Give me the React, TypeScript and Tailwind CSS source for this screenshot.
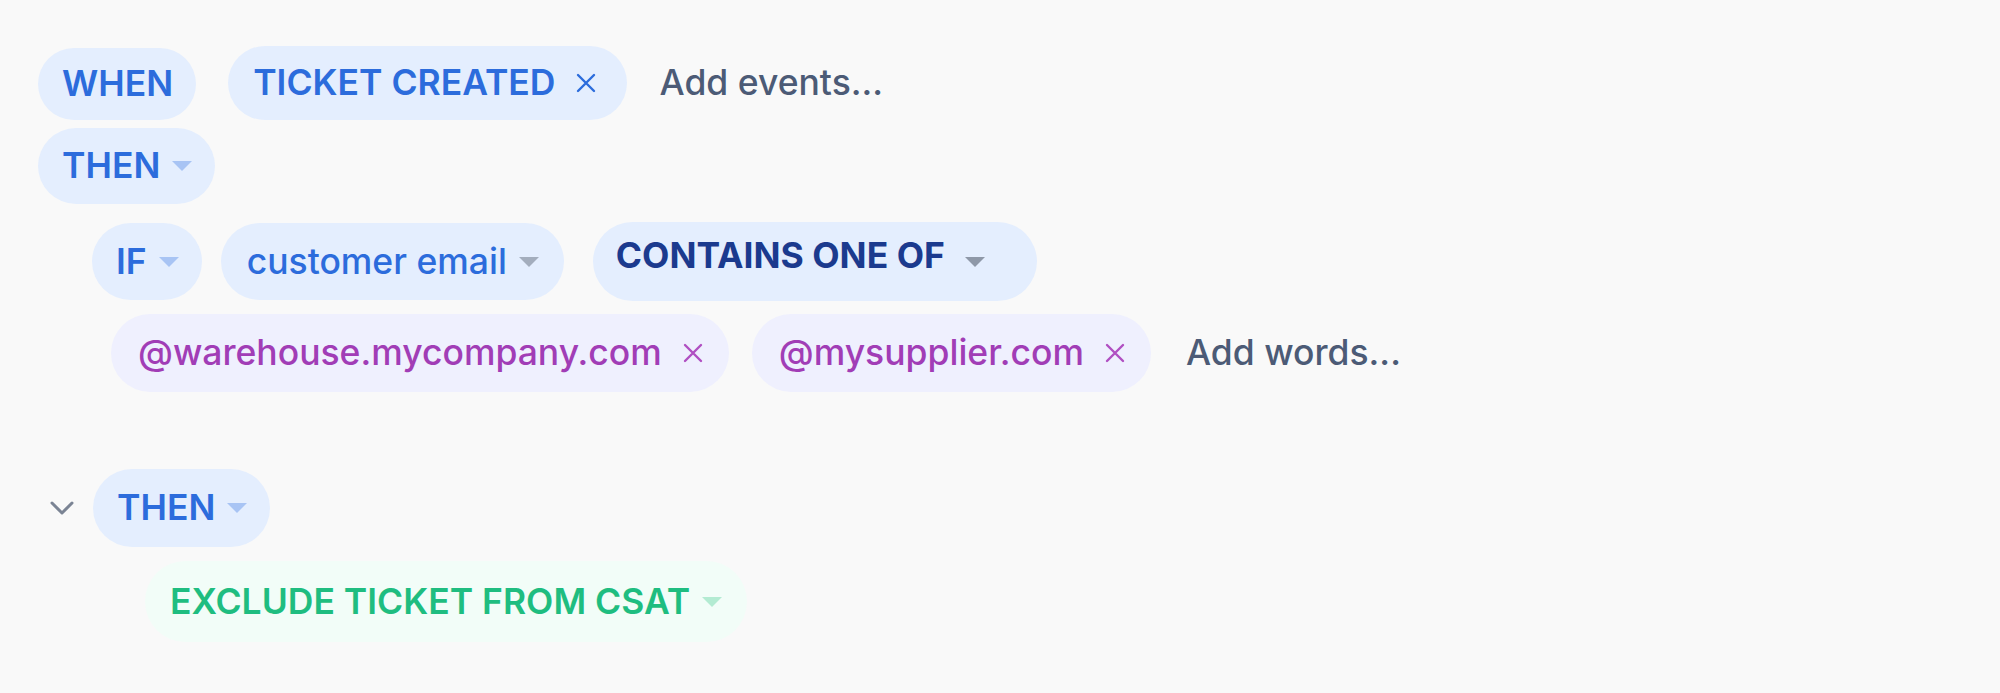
import React from 'react';

const Caret = ({ color }: { color: string }) => (
  <svg width="20" height="10" viewBox="0 0 20 10" className="shrink-0">
    <polygon points="0,0 20,0 10,10" fill={color} />
  </svg>
);

const Cross = ({ color }: { color: string }) => (
  <svg width="20" height="20" viewBox="0 0 20 20" className="shrink-0">
    <path d="M2 2 L18 18 M18 2 L2 18" stroke={color} strokeWidth="2.4" strokeLinecap="round" />
  </svg>
);

const Chevron = () => (
  <svg width="24" height="14" viewBox="0 0 24 14" className="shrink-0">
    <path d="M2 2 L12 12 L22 2" stroke="#7b8494" strokeWidth="3" fill="none" strokeLinecap="round" strokeLinejoin="round" />
  </svg>
);

const Keyword: React.FC<{ label: string; caret?: boolean; className?: string }> = ({ label, caret, className = '' }) => (
  <div className={`flex items-center gap-[12px] rounded-full bg-[#e4eefe] pl-[24px] pr-[23px] font-semibold text-[#2c6cdc] ${className}`}>
    <span>{label}</span>
    {caret && <Caret color="#a8c4f4" />}
  </div>
);

const Tag: React.FC<{ label: string }> = ({ label }) => (
  <div className="flex h-[78px] items-center gap-[21px] rounded-full bg-[#eff0fe] pl-[27px] pr-[26px] font-medium text-[#a13db6]">
    <span>{label}</span>
    <Cross color="#b04fc2" />
  </div>
);

export default function App() {
  return (
    <div className="min-h-screen bg-[#f9f9f9] pl-[38px] pt-[46px] font-['Inter',sans-serif] text-[35.5px] leading-none">
      {/* trigger */}
      <div className="flex items-center">
        <Keyword label="WHEN" className="mt-[2px] h-[72px]" />
        <div className="ml-[32px] flex h-[74px] items-center gap-[20px] rounded-full bg-[#e4eefe] pl-[25px] pr-[31px] font-semibold text-[#2c6cdc]">
          <span>TICKET CREATED</span>
          <Cross color="#2c6cdc" />
        </div>
        <span className="ml-[33px] font-medium text-[#4c5b76]">Add events...</span>
      </div>

      <div className="mt-[8px] flex">
        <Keyword label="THEN" caret className="h-[76px]" />
      </div>

      {/* condition */}
      <div className="ml-[54px] mt-[18px] flex items-center">
        <Keyword label="IF" caret className="h-[77px]" />
        <div className="ml-[19px] flex h-[77px] items-center gap-[12px] rounded-full bg-[#e4eefe] pl-[26px] pr-[25px] font-medium text-[#2c6cdc]">
          <span>customer email</span>
          <Caret color="#a3adbd" />
        </div>
        <div className="ml-[29px] flex h-[79px] items-center gap-[20px] rounded-full bg-[#e4eefe] pl-[23px] pr-[52px] font-bold text-[#1b3a8e]">
          <span className="-mt-[12px]">CONTAINS ONE OF</span>
          <Caret color="#8e98a8" />
        </div>
      </div>

      <div className="ml-[73px] mt-[13px] flex items-center">
        <Tag label="@warehouse.mycompany.com" />
        <div className="ml-[23px]">
          <Tag label="@mysupplier.com" />
        </div>
        <span className="ml-[35px] font-medium text-[#4c5b76]">Add words...</span>
      </div>

      {/* action */}
      <div className="mt-[77px] flex items-center">
        <div className="ml-[12px] mr-[19px] flex items-center">
          <Chevron />
        </div>
        <Keyword label="THEN" caret className="h-[78px]" />
      </div>

      <div className="ml-[107px] mt-[14px] flex">
        <div className="flex h-[81px] items-center gap-[12px] rounded-full bg-[#f2fdf8] pl-[25px] pr-[25px] font-semibold text-[#1fbd80]">
          <span>EXCLUDE TICKET FROM CSAT</span>
          <Caret color="#b3ebd2" />
        </div>
      </div>
    </div>
  );
}
